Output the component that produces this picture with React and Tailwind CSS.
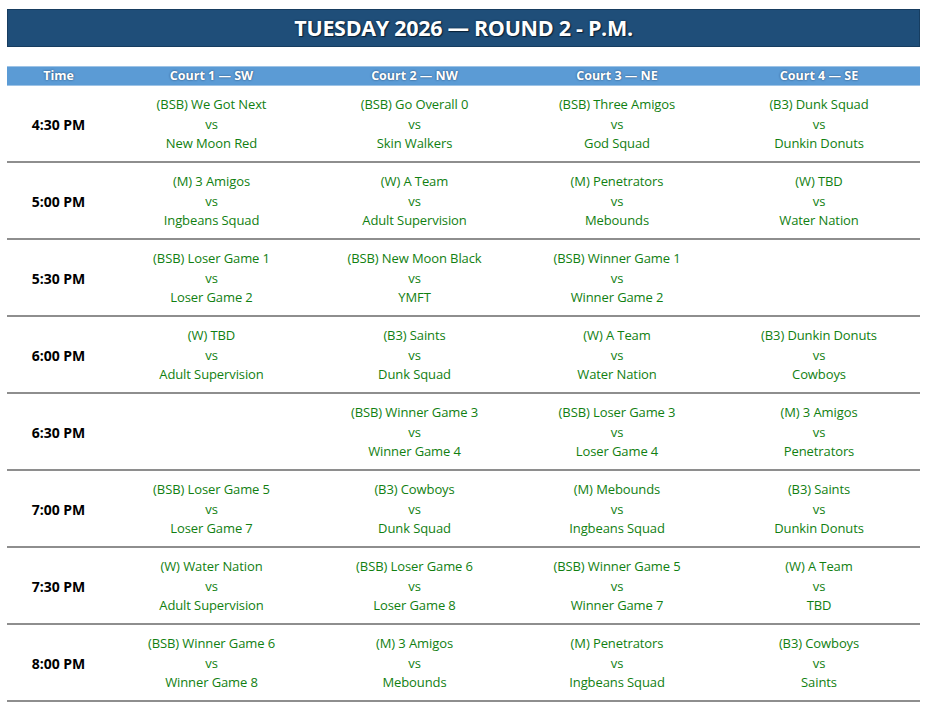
const rows = [
  {
    time: "4:30 PM",
    games: [
      ["(BSB) We Got Next", "New Moon Red"],
      ["(BSB) Go Overall 0", "Skin Walkers"],
      ["(BSB) Three Amigos", "God Squad"],
      ["(B3) Dunk Squad", "Dunkin Donuts"],
    ],
  },
  {
    time: "5:00 PM",
    games: [
      ["(M) 3 Amigos", "Ingbeans Squad"],
      ["(W) A Team", "Adult Supervision"],
      ["(M) Penetrators", "Mebounds"],
      ["(W) TBD", "Water Nation"],
    ],
  },
  {
    time: "5:30 PM",
    games: [
      ["(BSB) Loser Game 1", "Loser Game 2"],
      ["(BSB) New Moon Black", "YMFT"],
      ["(BSB) Winner Game 1", "Winner Game 2"],
      null,
    ],
  },
  {
    time: "6:00 PM",
    games: [
      ["(W) TBD", "Adult Supervision"],
      ["(B3) Saints", "Dunk Squad"],
      ["(W) A Team", "Water Nation"],
      ["(B3) Dunkin Donuts", "Cowboys"],
    ],
  },
  {
    time: "6:30 PM",
    games: [
      null,
      ["(BSB) Winner Game 3", "Winner Game 4"],
      ["(BSB) Loser Game 3", "Loser Game 4"],
      ["(M) 3 Amigos", "Penetrators"],
    ],
  },
  {
    time: "7:00 PM",
    games: [
      ["(BSB) Loser Game 5", "Loser Game 7"],
      ["(B3) Cowboys", "Dunk Squad"],
      ["(M) Mebounds", "Ingbeans Squad"],
      ["(B3) Saints", "Dunkin Donuts"],
    ],
  },
  {
    time: "7:30 PM",
    games: [
      ["(W) Water Nation", "Adult Supervision"],
      ["(BSB) Loser Game 6", "Loser Game 8"],
      ["(BSB) Winner Game 5", "Winner Game 7"],
      ["(W) A Team", "TBD"],
    ],
  },
  {
    time: "8:00 PM",
    games: [
      ["(BSB) Winner Game 6", "Winner Game 8"],
      ["(M) 3 Amigos", "Mebounds"],
      ["(M) Penetrators", "Ingbeans Squad"],
      ["(B3) Cowboys", "Saints"],
    ],
  },
]

const courts = ["Court 1 — SW", "Court 2 — NW", "Court 3 — NE", "Court 4 — SE"]

const cols = "grid grid-cols-[103px_203px_203px_202px_202px]"

export default function App() {
  return (
    <div className="min-h-screen bg-white pt-[9px] pl-[7px] font-['Open_Sans',sans-serif]">
      <div className="w-[913px] h-[38px] bg-[#1f4e79] border border-[#173d60] flex items-center justify-center">
        <h1 className="text-[21.5px] font-bold text-white tracking-[-0.3px] [text-shadow:0_0_2px_#0b2238,1px_1px_1px_#0b2238]">
          TUESDAY 2026 — ROUND 2 - P.M.
        </h1>
      </div>

      <div className="mt-[19px] w-[913px]">
        <div className={`${cols} h-[20px] bg-[#5b9bd5] border-y border-[#9dc3e6] items-center text-[12.5px] font-bold text-white [text-shadow:0_0_2px_#1f3f63]`}>
          <div className="text-center">Time</div>
          {courts.map((c) => (
            <div key={c} className="text-center">{c}</div>
          ))}
        </div>

        {rows.map((r) => (
          <div key={r.time} className={`${cols} h-[77px] border-b-2 border-[#8e8e8e] items-center`}>
            <div className="text-center text-[14px] font-bold text-black pt-px">{r.time}</div>
            {r.games.map((g, i) => (
              <div key={i} className="text-center text-[13px] leading-[19.5px] text-[#118011] tracking-[-0.1px] pt-[2px]">
                {g && (
                  <>
                    <div>{g[0]}</div>
                    <div>vs</div>
                    <div>{g[1]}</div>
                  </>
                )}
              </div>
            ))}
          </div>
        ))}
      </div>
    </div>
  )
}
